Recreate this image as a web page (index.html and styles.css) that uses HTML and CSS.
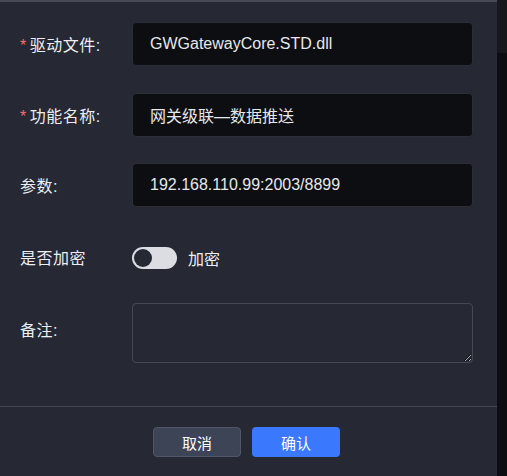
FILE: index.html
```html
<!DOCTYPE html>
<html lang="zh-CN">

<head>
    <meta charset="UTF-8">
    <meta name="viewport" content="width=device-width, initial-scale=1.0">
    <title>驱动配置</title>
    <link rel="stylesheet" href="styles.css">
</head>

<body>
    <div id="page">
        <div class="dialog">
            <form class="form">
                <div class="row">
                    <label class="label"><span class="req">*</span>驱动文件:</label>
                    <input class="input" type="text" value="GWGatewayCore.STD.dll">
                </div>
                <div class="row">
                    <label class="label"><span class="req">*</span>功能名称:</label>
                    <input class="input" type="text" value="网关级联—数据推送">
                </div>
                <div class="row">
                    <label class="label">参数:</label>
                    <input class="input" type="text" value="192.168.110.99:2003/8899">
                </div>
                <div class="row row-switch">
                    <label class="label">是否加密</label>
                    <div class="switch-wrap">
                        <span class="switch"><span class="knob"></span></span>
                        <span class="switch-text">加密</span>
                    </div>
                </div>
                <div class="row row-note">
                    <label class="label">备注:</label>
                    <textarea class="textarea"></textarea>
                </div>
            </form>
            <div class="footer">
                <button class="btn btn-cancel">取消</button>
                <button class="btn btn-ok">确认</button>
            </div>
        </div>
        <div class="side">
            <div class="side-top"></div>
        </div>
    </div>
</body>

</html>
```

FILE: styles.css
```css
* {
    margin: 0;
    padding: 0;
    box-sizing: border-box;
    font-family: "Liberation Sans", "Noto Sans CJK SC", sans-serif;
}

body {
    width: 507px;
    height: 476px;
    overflow: hidden;
    background-color: #0c0d10;
}

#page {
    display: flex;
    height: 476px;
}

.dialog {
    width: 497px;
    background-color: #262833;
    border-top: 2px solid #474952;
    display: flex;
    flex-direction: column;
}

.side {
    flex: 1;
    background-color: #0c0d10;
}
.side-top {
    height: 53px;
    background-color: #17181c;
}

.form {
    padding: 20px 24px 0 20px;
    height: 404px;
}

.row {
    display: flex;
    align-items: center;
    margin-bottom: 27px;
}
.row:nth-child(2) {
    margin-bottom: 26px;
}

.label {
    width: 112px;
    flex-shrink: 0;
    color: #eceef2;
    font-size: 16px;
    letter-spacing: 0.5px;
}
.req {
    color: #f56c6c;
    margin-right: 3px;
}

.input {
    width: 341px;
    height: 44px;
    background-color: #0d0e12;
    border: 1px solid #2c2e36;
    border-radius: 4px;
    color: #e6e8ec;
    font-size: 16px;
    padding: 0 17px;
    outline: none;
}

.row-switch {
    margin-top: 37px;
    margin-bottom: 33px;
}
.switch-wrap {
    display: flex;
    align-items: center;
    gap: 11px;
    margin-top: 2px;
}
.switch {
    width: 45px;
    height: 22px;
    border-radius: 11px;
    background-color: #dcdde3;
    display: flex;
    align-items: center;
    padding-left: 2px;
}
.knob {
    width: 18px;
    height: 18px;
    border-radius: 50%;
    background-color: #262833;
}
.switch-text {
    color: #eceef2;
    font-size: 16px;
}

.row-note {
    align-items: flex-start;
}
.row-note .label {
    margin-top: 14px;
}
.textarea {
    width: 341px;
    height: 60px;
    background-color: #262833;
    border: 1px solid #474952;
    border-radius: 4px;
    outline: none;
    color: #e6e8ec;
}

.footer {
    border-top: 1px solid #474952;
    display: flex;
    justify-content: center;
    gap: 11px;
    padding: 20px 4px 0 0;
}

.btn {
    width: 88px;
    height: 30px;
    border-radius: 4px;
    font-size: 15px;
    color: #ffffff;
    cursor: pointer;
}
.btn-cancel {
    background-color: #3c4456;
    border: 1px solid #4f5668;
}
.btn-ok {
    background-color: #3a78fd;
    border: none;
}
```
